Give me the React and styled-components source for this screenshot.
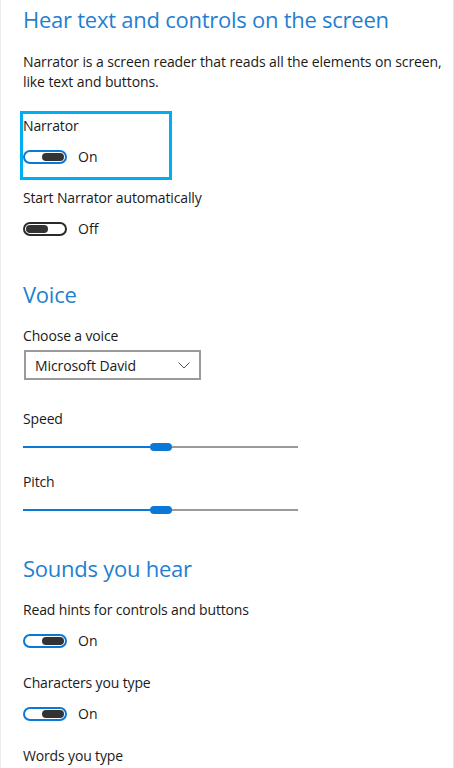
import React from "react";
import styled, { createGlobalStyle } from "styled-components";

const Global = createGlobalStyle`
  html, body { margin: 0; padding: 0; background: #fff; }
  body { font-family: "Open Sans", "Noto Sans", Arial, sans-serif; color: #1a1a1a; }
`;

const Page = styled.div`
  box-sizing: border-box;
  width: 454px;
  height: 768px;
  overflow: hidden;
  padding: 0 0 0 22px;
  border-left: 1px solid #ededed;
  border-right: 1px solid #e4e4e4;
  display: flex;
  flex-direction: column;
  align-items: flex-start;
`;

const Heading = styled.h2`
  margin: ${(p) => p.$top}px 0 0 0;
  font-size: 22px;
  line-height: 28px;
  font-weight: 400;
  color: #1f7fd2;
  letter-spacing: -0.25px;
  white-space: nowrap;
`;

const Para = styled.p`
  margin: 19px 0 0 0;
  font-size: 14px;
  line-height: 20px;
  width: 430px;
  letter-spacing: -0.1px;
`;

const Label = styled.div`
  margin-top: ${(p) => p.$top || 0}px;
  font-size: 14px;
  line-height: 20px;
  letter-spacing: -0.15px;
  white-space: nowrap;
`;

const FocusBox = styled.div`
  margin: 19px 0 0 -3px;
  width: 152px;
  box-sizing: border-box;
  border: 3px solid #00aeef;
  padding: 2px 0 13px 0;
`;

const ToggleRow = styled.div`
  margin-top: ${(p) => p.$top || 14}px;
  display: flex;
  align-items: center;
  gap: 11px;
  height: 14px;
`;

const Track = styled.div`
  box-sizing: border-box;
  width: 44px;
  height: 14px;
  border-radius: 7px;
  border: 2px solid ${(p) => (p.$on ? "#0a78d6" : "#2b2b2b")};
  display: flex;
  align-items: center;
  justify-content: ${(p) => (p.$on ? "flex-end" : "flex-start")};
  padding: 0 1px;
`;

const Knob = styled.div`
  width: 22px;
  height: 8px;
  border-radius: 4px;
  background: #333;
`;

const ToggleText = styled.span`
  font-size: 14px;
  line-height: 20px;
`;

function Toggle({ on, top }) {
  return (
    <ToggleRow $top={top}>
      <Track $on={on}>
        <Knob />
      </Track>
      <ToggleText>{on ? "On" : "Off"}</ToggleText>
    </ToggleRow>
  );
}

const Select = styled.div`
  margin: 4px 0 0 1px;
  box-sizing: border-box;
  width: 177px;
  height: 30px;
  border: 2px solid #9a9a9a;
  display: flex;
  align-items: center;
  justify-content: space-between;
  padding: 0 9px 0 9px;
  font-size: 14px;
  letter-spacing: -0.1px;
`;

const SliderWrap = styled.div`
  margin-top: 10px;
  width: 275px;
  height: 16px;
  display: flex;
  align-items: center;
`;

const Fill = styled.div`
  height: 2px;
  background: ${(p) => (p.$active ? "#0a78d6" : "#9a9a9a")};
  flex: ${(p) => (p.$active ? "none" : "1")};
`;

const Thumb = styled.div`
  width: 22px;
  height: 8px;
  border-radius: 4px;
  background: #0a78d6;
  flex: none;
`;

function Slider({ value }) {
  return (
    <SliderWrap>
      <Fill $active style={{ width: value }} />
      <Thumb />
      <Fill />
    </SliderWrap>
  );
}

export default function App() {
  return (
    <>
      <Global />
      <Page>
        <Heading $top={5}>Hear text and controls on the screen</Heading>
        <Para>
          Narrator is a screen reader that reads all the elements on screen,
          like text and buttons.
        </Para>
        <FocusBox>
          <Label>Narrator</Label>
          <Toggle on />
        </FocusBox>
        <Label $top={8}>Start Narrator automatically</Label>
        <Toggle on={false} />

        <Heading $top={44}>Voice</Heading>
        <Label $top={18}>Choose a voice</Label>
        <Select>
          <span>Microsoft David</span>
          <svg width="12" height="7" viewBox="0 0 12 7">
            <path d="M0.5 0.5 L6 6 L11.5 0.5" fill="none" stroke="#555" strokeWidth="1" />
          </svg>
        </Select>
        <Label $top={29}>Speed</Label>
        <Slider value={127} />
        <Label $top={17}>Pitch</Label>
        <Slider value={127} />

        <Heading $top={36}>Sounds you hear</Heading>
        <Label $top={18}>Read hints for controls and buttons</Label>
        <Toggle on />
        <Label $top={25}>Characters you type</Label>
        <Toggle on />
        <Label $top={25}>Words you type</Label>
      </Page>
    </>
  );
}
